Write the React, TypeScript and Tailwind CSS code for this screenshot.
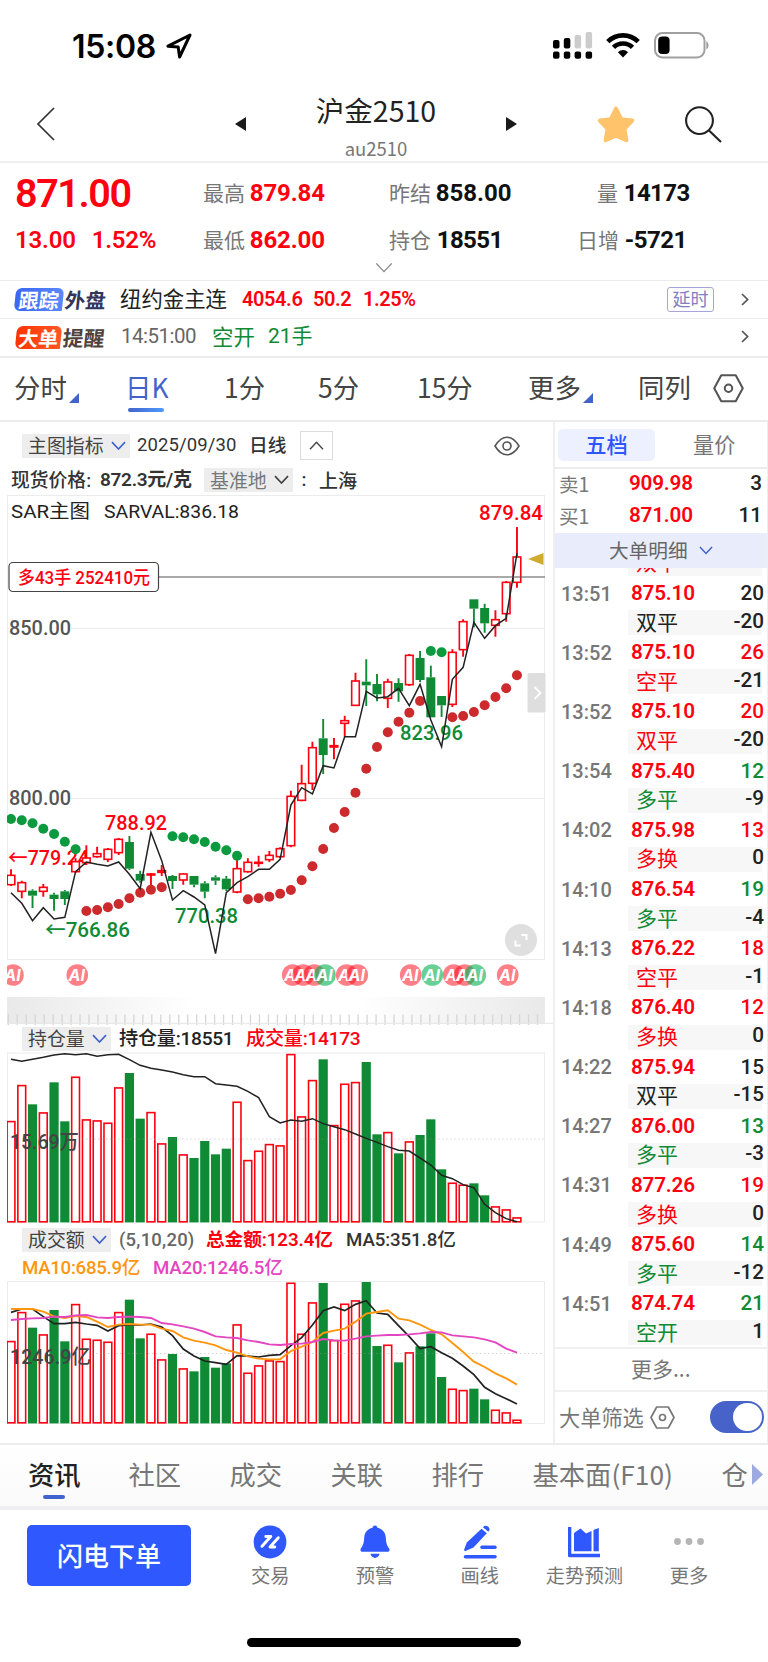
import React from "react";

type Tone = "r" | "g";

type Candle = [Tone, number, number, number, number];

type Deal = {
  time: string;
  price: string;
  vol: string;
  volColor: string;
  kind: string;
  kindColor: string;
  diff: string;
};

const RED = "#ff0010";
const GREEN = "#0f8a35";
const PITCH = 10.765;
const NUM = "font-['Roboto','Noto_Sans_CJK_SC',sans-serif]";

const cx = (i: number) => 11 + i * PITCH;

// series values are 3x pixels counted from the top of their own chart area
const mainY = (v: number) => 480 + v / 3;
const volY = (v: number) => 950 + v / 3;
const amtY = (v: number) => 1220 + v / 3;

// tone, high, body top, body bottom, low
const candles: Candle[] = [
  ["r", 1168, 1186, 1214, 1218],
  ["r", 1202, 1208, 1234, 1255],
  ["g", 1228, 1232, 1247, 1284],
  ["r", 1212, 1222, 1234, 1250],
  ["g", 1238, 1244, 1257, 1292],
  ["g", 1230, 1234, 1257, 1275],
  ["r", 1135, 1145, 1175, 1178],
  ["r", 1096, 1134, 1148, 1155],
  ["r", 1100, 1121, 1130, 1133],
  ["r", 1104, 1108, 1138, 1146],
  ["r", 1074, 1078, 1118, 1125],
  ["g", 1068, 1086, 1166, 1170],
  ["g", 1172, 1182, 1202, 1208],
  ["r", 1179, 1182, 1185, 1220],
  ["r", 1155, 1172, 1177, 1188],
  ["g", 1185, 1188, 1203, 1227],
  ["r", 1180, 1182, 1200, 1214],
  ["g", 1188, 1188, 1214, 1222],
  ["g", 1204, 1210, 1235, 1255],
  ["g", 1186, 1192, 1202, 1215],
  ["g", 1188, 1196, 1228, 1233],
  ["r", 1135, 1166, 1236, 1240],
  ["r", 1135, 1147, 1175, 1178],
  ["r", 1127, 1147, 1150, 1160],
  ["r", 1113, 1126, 1139, 1146],
  ["r", 1102, 1106, 1130, 1135],
  ["r", 932, 949, 1097, 1102],
  ["r", 854, 911, 961, 964],
  ["r", 785, 803, 910, 930],
  ["g", 717, 775, 825, 882],
  ["r", 774, 797, 801, 838],
  ["r", 707, 722, 730, 770],
  ["r", 578, 603, 676, 678],
  ["g", 538, 605, 616, 678],
  ["g", 582, 612, 643, 664],
  ["r", 596, 606, 655, 684],
  ["g", 595, 609, 634, 665],
  ["r", 522, 526, 614, 618],
  ["g", 513, 534, 600, 606],
  ["g", 557, 592, 712, 712],
  ["g", 648, 648, 676, 711],
  ["r", 508, 517, 673, 681],
  ["r", 418, 425, 509, 530],
  ["g", 358, 358, 386, 442],
  ["g", 371, 384, 430, 458],
  ["r", 391, 419, 436, 470],
  ["r", 303, 307, 401, 425],
  ["r", 141, 231, 307, 323],
];

const spot = [
  1238, 1270, 1322, 1283, 1317, 1312, 1175, 1146, 1153, 1158, 1146, 1183, 1226, 1057, 1142, 1260,
  1232, 1251, 1275, 1421, 1238, 1208, 1190, 1168, 1168, 1138, 975, 923, 942, 857, 864, 770, 770,
  634, 654, 650, 625, 677, 613, 720, 800, 598, 562, 427, 475, 437, 415, 220,
];

const sar = [
  1017, 1021, 1030, 1046, 1062, 1085, 1108, 1293, 1290, 1282, 1272, 1255, 1238, 1229, 1222, 1069,
  1072, 1078, 1086, 1100, 1111, 1127, 1258, 1255, 1250, 1241, 1230, 1201, 1159, 1107, 1044, 996,
  938, 866, 801, 757, 725, 698, 663, 513, 517, 712, 708, 696, 676, 651, 625, 586,
];

const sarIsGreen = (i: number) => i < 7 || (i > 14 && i < 22) || i === 39 || i === 40;

const volume = [
  513, 405, 463, 487, 397, 514, 380, 508, 511, 518, 412, 369, 506, 486, 580, 561, 613, 624, 573,
  613, 596, 455, 630, 602, 582, 586, 312, 499, 390, 328, 525, 401, 396, 336, 553, 546, 610, 574,
  555, 508, 658, 698, 704, 700, 736, 769, 778, 802,
];

const position = [
  328, 334, 328, 322, 315, 311, 314, 311, 319, 314, 313, 329, 346, 355, 360, 366, 374, 380, 380,
  401, 405, 409, 424, 443, 500, 519, 510, 514, 506, 521, 530, 539, 552, 565, 577, 590, 601, 603,
  624, 645, 676, 686, 704, 713, 763, 788, 806, 815,
];

const amount = [
  363, 276, 323, 343, 270, 364, 252, 356, 359, 365, 276, 239, 355, 341, 418, 402, 445, 454, 411,
  443, 430, 313, 458, 436, 421, 423, 188, 341, 247, 189, 360, 251, 241, 186, 378, 374, 427, 397,
  379, 340, 471, 506, 510, 506, 538, 569, 577, 599,
];

const ma5 = [
  277, 267, 267, 290, 311, 311, 307, 312, 316, 333, 317, 315, 315, 312, 321, 347, 387, 408, 423,
  428, 433, 407, 408, 411, 406, 404, 377, 353, 315, 272, 261, 272, 253, 242, 279, 283, 317, 350,
  386, 380, 398, 415, 438, 464, 502, 521, 536, 552,
];

const ma10 = [
  267, 267, 267, 275, 289, 294, 288, 291, 305, 321, 314, 312, 314, 314, 326, 333, 352, 362, 368,
  376, 390, 398, 409, 416, 418, 418, 393, 380, 366, 339, 332, 326, 305, 281, 276, 271, 296, 301,
  314, 330, 343, 369, 396, 425, 441, 460, 475, 494,
];

const ma20 = [
  300, 297, 295, 294, 290, 291, 286, 285, 292, 294, 291, 290, 291, 294, 309, 313, 319, 326, 336,
  349, 352, 354, 361, 366, 373, 375, 372, 371, 366, 357, 361, 362, 356, 349, 347, 345, 345, 343,
  340, 336, 337, 346, 349, 352, 358, 367, 386, 398,
];

const badges: [number, Tone][] = [
  [13, "r"],
  [77.3, "r"],
  [292.7, "r"],
  [303.3, "r"],
  [314.3, "r"],
  [325, "g"],
  [346.7, "r"],
  [357.3, "r"],
  [410.7, "r"],
  [432.3, "g"],
  [453.7, "r"],
  [464.7, "r"],
  [475.3, "g"],
  [507.7, "r"],
];

const R = "text-[#ff0010]";
const G = "text-[#0f8a35]";
const K = "text-[#222]";

const deals: Deal[] = [
  { time: "13:51", price: "875.10", vol: "20", volColor: K, kind: "双平", kindColor: K, diff: "-20" },
  { time: "13:52", price: "875.10", vol: "26", volColor: R, kind: "空平", kindColor: R, diff: "-21" },
  { time: "13:52", price: "875.10", vol: "20", volColor: R, kind: "双平", kindColor: R, diff: "-20" },
  { time: "13:54", price: "875.40", vol: "12", volColor: G, kind: "多平", kindColor: G, diff: "-9" },
  { time: "14:02", price: "875.98", vol: "13", volColor: R, kind: "多换", kindColor: R, diff: "0" },
  { time: "14:10", price: "876.54", vol: "19", volColor: G, kind: "多平", kindColor: G, diff: "-4" },
  { time: "14:13", price: "876.22", vol: "18", volColor: R, kind: "空平", kindColor: R, diff: "-1" },
  { time: "14:18", price: "876.40", vol: "12", volColor: R, kind: "多换", kindColor: R, diff: "0" },
  { time: "14:22", price: "875.94", vol: "15", volColor: K, kind: "双平", kindColor: K, diff: "-15" },
  { time: "14:27", price: "876.00", vol: "13", volColor: G, kind: "多平", kindColor: G, diff: "-3" },
  { time: "14:31", price: "877.26", vol: "19", volColor: R, kind: "多换", kindColor: R, diff: "0" },
  { time: "14:49", price: "875.60", vol: "14", volColor: G, kind: "多平", kindColor: G, diff: "-12" },
  { time: "14:51", price: "874.74", vol: "21", volColor: G, kind: "空开", kindColor: G, diff: "1" },
];

const points = (values: number[], y: (v: number) => number) =>
  values.map((v, i) => `${cx(i)},${y(v)}`).join(" ");

const Label = ({
  x,
  y,
  w,
  size = 20,
  fill,
  weight = 500,
  children,
}: {
  x: number;
  y: number;
  w: number;
  size?: number;
  fill: string;
  weight?: number;
  children: string;
}) => (
  <text
    x={x}
    y={y}
    textLength={w}
    lengthAdjust="spacingAndGlyphs"
    fontSize={size}
    fontWeight={weight}
    fill={fill}
    className={NUM}
  >
    {children}
  </text>
);

const Chevron = ({ className, w = 15, color = "#4263cc", sw = 1.8 }: { className?: string; w?: number; color?: string; sw?: number }) => (
  <svg width={w} height={w * 0.62} viewBox="0 0 16 10" className={`shrink-0 ${className ?? ""}`} fill="none" stroke={color} strokeWidth={sw}>
    <path d="M1 1.2 L8 8.6 L15 1.2" />
  </svg>
);

const Right = () => (
  <svg width="8" height="13" viewBox="0 0 8 13" className="shrink-0" fill="none" stroke="#555" strokeWidth="1.7">
    <path d="M1 1 L6.6 6.5 L1 12" />
  </svg>
);

const Hexagon = ({ size, color = "#555", className }: { size: number; color?: string; className?: string }) => (
  <svg width={size} height={size * 0.92} viewBox="0 0 30 27.6" fill="none" stroke={color} strokeWidth="2" strokeLinejoin="round" className={`shrink-0 ${className ?? ""}`}>
    <path d="M8 1.2 H22 L28.8 13.8 L22 26.4 H8 L1.2 13.8 Z" />
    <circle cx="15" cy="13.8" r="3.6" />
  </svg>
);

const StatusBar = () => (
  <div className="flex h-[80px] items-start pt-[32px] pl-[72px]">
    <div className="-mt-[5px] w-[85px] font-['Inter',sans-serif] text-[32px] leading-[40px] font-semibold tracking-[-0.3px] text-black">15:08</div>
    <svg width="26" height="26" viewBox="0 0 26 26" className="mt-[1px] ml-[9px]" fill="none" stroke="#000" strokeWidth="3" strokeLinejoin="round">
      <path d="M24 2 L2 13.2 L12.2 14 L13.6 24 Z" />
    </svg>
    <svg width="40" height="28" viewBox="0 0 40 28" className="ml-[361px]">
      <rect x="0" y="8" width="6.5" height="8.4" rx="2" />
      <rect x="10.8" y="6" width="6.5" height="10.4" rx="2" />
      <rect x="21.6" y="3" width="6.5" height="13.4" rx="2" fill="#ccc" />
      <rect x="32.6" y="0" width="6.5" height="16.4" rx="2" fill="#ccc" />
      {[0, 10.8, 21.6, 32.6].map((x) => (
        <rect key={x} x={x} y="19.4" width="6.5" height="7.4" rx="2" />
      ))}
    </svg>
    <svg width="34" height="25" viewBox="0 0 34 25" className="mt-[1px] ml-[13px]" fill="none" stroke="#000" strokeWidth="4.6">
      <path d="M1.8 8.6 A21.6 21.6 0 0 1 32.2 8.6" />
      <path d="M7.5 14.4 A13.4 13.4 0 0 1 26.5 14.4" />
      <path d="M17 24.4 L11.9 19.2 A7.2 7.2 0 0 1 22.1 19.2 Z" fill="#000" stroke="none" />
    </svg>
    <svg width="56" height="27" viewBox="0 0 56 27" className="ml-[14px]">
      <rect x="1" y="1" width="49.5" height="24.4" rx="7.5" fill="none" stroke="#a0a0a0" strokeWidth="2" />
      <rect x="4.2" y="4.4" width="11.4" height="17.6" rx="4" />
      <path d="M52.3 9 A5 5 0 0 1 52.3 17.4 Z" fill="#a0a0a0" />
    </svg>
  </div>
);

const Header = () => (
  <div className="grid h-[83px] grid-cols-[235px_298px_235px] border-b-2 border-[#efefef]">
    <svg width="20" height="34" viewBox="0 0 20 34" className="mt-[27px] ml-[36px]" fill="none" stroke="#333" strokeWidth="1.7">
      <path d="M18 1 L2 17 L18 33" />
    </svg>
    <div className="flex">
      <svg width="11" height="14" viewBox="0 0 11 14" className="mt-[37px]" fill="#1a1a1a">
        <path d="M11 0 V14 L0 7 Z" />
      </svg>
      <div className="w-[260px] text-center">
        <div className="mt-[12px] text-[28.5px] leading-[36px] text-[#222]">沪金2510</div>
        <div className="mt-[10px] text-[18.5px] leading-[20px] text-[#777]">au2510</div>
      </div>
      <svg width="11" height="14" viewBox="0 0 11 14" className="mt-[37px]" fill="#1a1a1a">
        <path d="M0 0 V14 L11 7 Z" />
      </svg>
    </div>
    <div className="flex pt-[26px] pl-[64px]">
      <svg width="38" height="38" viewBox="0 0 38 38" fill="#ffc36b" stroke="#ffc36b" strokeWidth="4" strokeLinejoin="round">
        <path d="M19 2.5 L24.2 13.2 L35.2 14.6 L27.4 22.8 L29.4 34.3 L19 29.6 L8.6 34.3 L10.6 22.8 L2.8 14.6 L13.8 13.2 Z" />
      </svg>
      <svg width="38" height="38" viewBox="0 0 38 38" className="ml-[49px]" fill="none" stroke="#222" strokeWidth="2.1">
        <circle cx="15.500" cy="14.6" r="13.4" />
        <path d="M25 24.5 L37 36" />
      </svg>
    </div>
  </div>
);

const Quote = () => (
  <div className="h-[117px] pt-[7px] pl-[15px]">
    <div className="grid h-[46px] grid-cols-[188px_186px_188px_1fr] items-center whitespace-nowrap text-[21px] text-[#777]">
      <span className={`${NUM} mt-[2px] text-[39.5px] leading-none font-semibold tracking-[-1.4px] text-[#ff0010]`}>871.00</span>
      <span>最高 <b className={`${NUM} text-[24px] tracking-[-0.1px] text-[#ff0010]`}>879.84</b></span>
      <span>昨结 <b className={`${NUM} text-[24px] text-[#111]`}>858.00</b></span>
      <span className="pl-[20px]">量 <b className={`${NUM} ml-[1px] text-[24px] tracking-[-0.6px] text-[#111]`}>14173</b></span>
    </div>
    <div className="mt-[1px] grid h-[46px] grid-cols-[188px_186px_188px_1fr] items-center whitespace-nowrap text-[21px] text-[#777]">
      <span className={`${NUM} flex gap-[16px] text-[24px] font-semibold tracking-[-0.2px] text-[#ff0010]`}>
        <span>13.00</span>
        <span>1.52%</span>
      </span>
      <span>最低 <b className={`${NUM} text-[24px] tracking-[-0.1px] text-[#ff0010]`}>862.00</b></span>
      <span>持仓 <b className={`${NUM} ml-[1px] text-[24px] tracking-[-0.6px] text-[#111]`}>18551</b></span>
      <span>日增 <b className={`${NUM} ml-[1px] text-[24px] tracking-[-0.5px] text-[#111]`}>-5721</b></span>
    </div>
    <Chevron w={18} color="#888" sw={1.2} className="mt-[-1px] ml-[360px]" />
  </div>
);

const Notices = () => (
  <div className="text-[21.4px] whitespace-nowrap">
    <div className="flex h-[38px] items-center border-t border-[#ebebeb] pb-[2px] pl-[15px]">
      <span className="mt-[2px] flex h-[23px] w-[48px] -skew-x-6 items-center justify-center rounded-[6px] rounded-br-none bg-gradient-to-r from-[#3c66f5] to-[#5b88ff] text-[20px] leading-none font-bold text-white">跟踪</span>
      <span className="mt-[1px] ml-[2px] w-[41px] -skew-x-6 text-[20.5px] leading-none font-bold text-[#33365a]">外盘</span>
      <span className="ml-[14px] w-[122px] text-[#222]">纽约金主连</span>
      <span className={`${NUM} w-[71px] text-[20px] font-semibold tracking-[-0.4px] text-[#ff0010]`}>4054.6</span>
      <span className={`${NUM} w-[50px] text-[20px] font-semibold tracking-[-0.4px] text-[#ff0010]`}>50.2</span>
      <span className={`${NUM} w-[304px] text-[20px] font-semibold tracking-[-0.4px] text-[#ff0010]`}>1.25%</span>
      <span className="mt-[1px] flex h-[25px] w-[47px] items-center justify-center rounded-[3px] border-[1.5px] border-[#a5a5dc] pb-[1px] text-[18px] text-[#8080c0]">延时</span>
      <span className="mt-[1px] ml-[27px]"><Right /></span>
    </div>
    <div className="flex h-[38px] items-center border-t border-[#ebebeb] pb-[2px] pl-[16px]">
      <span className="mt-[2px] flex h-[23px] w-[45px] -skew-x-6 items-center justify-center rounded-[6px] rounded-br-none bg-gradient-to-r from-[#ff3300] to-[#ff5722] text-[20px] leading-none font-bold text-white">大单</span>
      <span className="mt-[1px] ml-[2px] w-[43px] -skew-x-6 text-[20.8px] leading-none font-bold text-[#4f413b]">提醒</span>
      <span className={`${NUM} ml-[15px] w-[91px] text-[20.5px] tracking-[-0.5px] text-[#666]`}>14:51:00</span>
      <span className={`${G} w-[56px]`}>空开</span>
      <span className={`${G} ${NUM} w-[473px] text-[21px]`}>21手</span>
      <Right />
    </div>
  </div>
);

const Corner = ({ className }: { className: string }) => (
  <svg width="10" height="10" viewBox="0 0 10 10" className={className} fill="#4263cc">
    <path d="M10 0 V10 H0 Z" />
  </svg>
);

const PeriodTabs = () => (
  <div className="flex h-[66px] items-center border-y-2 border-[#ececec] pb-[4px] pl-[14px] text-[26.4px] whitespace-nowrap text-[#444]">
    <span className="w-[54px]">分时</span>
    <Corner className="mt-[22px] ml-[1px]" />
    <span className="relative ml-[46px] w-[99px] text-[#4263cc]">
      日K
      <i className="absolute top-[41px] left-[3px] h-[4px] w-[36px] rounded-full bg-gradient-to-r from-[#4263cc] to-[#4f9bff]" />
    </span>
    <span className="w-[94px]">1分</span>
    <span className="w-[99px]">5分</span>
    <span className="w-[111px]">15分</span>
    <span className="w-[54px]">更多</span>
    <Corner className="mt-[22px] ml-[1px]" />
    <span className="ml-[45px] w-[75px]">同列</span>
    <Hexagon size={31} className="mt-[3px]" />
  </div>
);

const Bars = ({ values, y, bottom }: { values: number[]; y: (v: number) => number; bottom: number }) => (
  <>
    {values.map((v, i) =>
      candles[i][0] === "g" ? (
        <rect key={i} x={cx(i) - 4.6} y={y(v)} width={9.2} height={bottom - y(v)} fill={GREEN} />
      ) : (
        <rect key={i} x={cx(i) - 3.9} y={y(v) + 0.6} width={7.8} height={bottom - y(v) - 1.2} fill="#fff" stroke={RED} strokeWidth={1.6} />
      )
    )}
  </>
);

const MainChart = () => (
  <svg width="553" height="531" viewBox="0 494 553 531" className="block">
    <defs>
      <clipPath id="plot">
        <rect x="7" y="494" width="538" height="531" />
      </clipPath>
      <linearGradient id="ruler">
        <stop offset="0" stopColor="#e9e9e9" />
        <stop offset="0.35" stopColor="#fff" />
        <stop offset="0.65" stopColor="#fff" />
        <stop offset="1" stopColor="#e9e9e9" />
      </linearGradient>
    </defs>
    <rect x="7.5" y="495.5" width="537" height="464" fill="none" stroke="#ececec" />
    <path d="M8 628.5 H544 M8 798.5 H544" stroke="#ececec" />
    <Label x={11} y={518} w={79} size={19} fill="#222" weight={400}>SAR主图</Label>
    <Label x={104} y={518} w={135} size={19} fill="#222" weight={400}>SARVAL:836.18</Label>
    <rect x="9" y="619" width="62" height="18" fill="#fff" />
    <rect x="9" y="789" width="62" height="18" fill="#fff" />
    <Label x={9} y={634.5} w={62} fill="#555" size={20.5} weight={500}>850.00</Label>
    <Label x={9} y={804.5} w={62} fill="#555" size={20.5} weight={500}>800.00</Label>
    <Label x={8} y={864.5} w={81} fill={RED} size={20.5}>←779.24</Label>
    <Label x={105} y={829.5} w={62} fill={RED} size={20.5}>788.92</Label>
    <Label x={479} y={519.5} w={64} fill={RED} size={20.5}>879.84</Label>
    <Label x={45} y={937} w={85} fill={GREEN} size={20.5}>←766.86</Label>
    <Label x={175} y={923} w={63} fill={GREEN} size={20.5}>770.38</Label>
    <Label x={400} y={740} w={63} fill={GREEN} size={20.5}>823.96</Label>
    <g clipPath="url(#plot)">
      {candles.map(([tone, hi, top, bottom, lo], i) => {
        const color = tone === "r" ? RED : GREEN;
        return (
          <g key={i} stroke={color} strokeWidth={1.9}>
            <path d={`M${cx(i)} ${mainY(hi)} V${mainY(top)} M${cx(i)} ${mainY(bottom)} V${mainY(lo)}`} />
            {tone === "r" ? (
              <rect x={cx(i) - 3.8} y={mainY(top)} width={7.6} height={mainY(bottom) - mainY(top)} fill="#fff" strokeWidth={1.6} />
            ) : (
              <rect x={cx(i) - 4.5} y={mainY(top)} width={9} height={mainY(bottom) - mainY(top)} fill={color} stroke="none" />
            )}
          </g>
        );
      })}
      {sar.map((v, i) => (
        <circle key={i} cx={cx(i)} cy={mainY(v)} r={5} fill={sarIsGreen(i) ? "#0c9a3f" : "#cc2a2c"} />
      ))}
      <polyline points={points(spot, mainY)} fill="none" stroke="#222" strokeWidth={1.5} />
      <path d="M158 577 H545" stroke="#555" strokeWidth="1.2" />
      {badges.map(([x, tone]) => (
        <g key={x}>
          <circle cx={x} cy={975} r={10.8} fill={tone === "r" ? RED : "#00b050"} fillOpacity={tone === "r" ? 0.5 : 0.6} />
          <text x={x - 0.5} y={981} textAnchor="middle" fontSize="16" fontWeight="700" fontStyle="italic" fill="#fff" className="font-['Inter',sans-serif]">
            AI
          </text>
        </g>
      ))}
      <rect x="7" y="997" width="538" height="27" fill="url(#ruler)" />
      {Array.from({ length: 60 }, (_, i) => (
        <path key={i} d={`M${8.3 + i * 8.97} 1014.5 V1025`} stroke="#d6d6d6" strokeWidth="1.3" />
      ))}
    </g>
    <path d="M7 1023.3 H553" stroke="#e6e6e6" strokeWidth="1" />
    <rect x="9" y="562.5" width="149.5" height="29" rx="4" fill="#fff" stroke="#444" strokeWidth="1.2" />
    <Label x={18} y={584} w={132} size={18} fill={RED}>多43手 252410元</Label>
    <path d="M528 559 L543.5 553 V565 Z" fill="#d1ac2c" />
    <rect x="527.5" y="673" width="18" height="39.5" rx="1.5" fill="#dedede" />
    <path d="M534.5 687 L540.5 693 L534.5 699" fill="none" stroke="#fff" strokeWidth="1.8" />
    <circle cx="521" cy="940" r="16" fill="#dfdfdf" />
    <path d="M521.5 935 H526.5 V940 M520.5 945.5 H515.5 V940.5" fill="none" stroke="#fff" strokeWidth="2" />
  </svg>
);

const VolumeChart = () => (
  <svg width="553" height="172" viewBox="0 1052 553 172" className="block">
    <clipPath id="vol">
      <rect x="7" y="1052" width="538" height="171" />
    </clipPath>
    <rect x="7.5" y="1053" width="537" height="169" fill="none" stroke="#ececec" />
    <g clipPath="url(#vol)">
      <Bars values={volume} y={volY} bottom={1222.4} />
      <path d="M82 1139 H544" stroke="#999" strokeOpacity="0.4" strokeDasharray="1.5 2.5" />
      <polyline points={points(position, volY)} fill="none" stroke="#222" strokeWidth={1.5} />
    </g>
    <Label x={10} y={1149} w={69} size={20} fill="#444">15.69万</Label>
  </svg>
);

const AmountChart = () => (
  <svg width="553" height="145" viewBox="0 1280 553 145" className="block">
    <clipPath id="amt">
      <rect x="7" y="1280" width="538" height="145" />
    </clipPath>
    <rect x="7.5" y="1281.5" width="537" height="142" fill="none" stroke="#ececec" />
    <g clipPath="url(#amt)">
      <Bars values={amount} y={amtY} bottom={1423.4} />
      <path d="M92 1353.5 H544" stroke="#999" strokeOpacity="0.4" strokeDasharray="1.5 2.5" />
      <polyline points={points(ma5, amtY)} fill="none" stroke="#222" strokeWidth={1.7} />
      <polyline points={points(ma10, amtY)} fill="none" stroke="#ff960f" strokeWidth={1.9} />
      <polyline points={points(ma20, amtY)} fill="none" stroke="#e445c0" strokeWidth={1.9} />
    </g>
    <Label x={10} y={1364} w={81} size={20} fill="#444">1246.9亿</Label>
  </svg>
);

const Picker = ({ text, className }: { text: string; className: string }) => (
  <span className={`flex h-[24px] shrink-0 items-center justify-between rounded-[1px] bg-[#ededed] px-[4px] text-[18.9px] leading-none text-[#444] ${className}`}>
    <span className="-mt-[1px]">{text}</span>
    <Chevron />
  </span>
);

const ChartColumn = () => (
  <div className="w-[553px] shrink-0 whitespace-nowrap">
    <div className="flex h-[45px] items-center pt-[2px] pl-[22px]">
      <Picker text="主图指标" className="w-[108px] pl-[6px]" />
      <span className={`${NUM} ml-[7px] w-[112px] text-[18.5px] tracking-[0.1px] text-[#333]`}>2025/09/30</span>
      <span className="-mt-[2px] w-[51px] text-[18.7px] font-medium text-[#333]">日线</span>
      <span className="flex h-[29px] w-[33px] items-center justify-center border border-[#dcdcdc]">
        <Chevron color="#444" sw={1.5} className="rotate-180" />
      </span>
      <svg width="26" height="20" viewBox="0 0 26 20" className="ml-[161px]" fill="none" stroke="#555" strokeWidth="1.6">
        <path d="M1 10 C5 3.5 9 1.2 13 1.2 S21 3.5 25 10 C21 16.500 17 18.800 13 18.800 S5 16.500 1 10 Z" />
        <circle cx="13" cy="10" r="4" />
      </svg>
    </div>
    <div className="flex h-[27px] items-center pb-[1px] pl-[11px] text-[18.8px] font-medium text-[#333]">
      <span className="w-[89px]">现货价格<span className={NUM}>:</span></span>
      <span className={`${NUM} w-[104px] text-[19px] font-semibold tracking-[-0.3px]`}>872.3元/克</span>
      <span className="flex h-[24px] w-[89px] items-center justify-between bg-[#ededed] px-[4px] pl-[6px] text-[18.9px] leading-none font-normal text-[#777]">
        <span>基准地</span>
        <Chevron color="#444" />
      </span>
      <span className={`${NUM} ml-[2px] w-[18px] text-center`}>:</span>
      <span className="ml-[6px] text-[19px]">上海</span>
    </div>
    <MainChart />
    <div className="flex h-[27px] items-center pl-[22px] text-[18.7px] font-medium">
      <Picker text="持仓量" className="w-[89px] pl-[6px] font-normal" />
      <span className={`${NUM} ml-[8px] w-[127px] pt-[2px] text-[19.2px] tracking-[-0.3px] text-[#222]`}>持仓量:18551</span>
      <span className={`${NUM} pt-[2px] text-[19.2px] tracking-[-0.3px] text-[#ff0010]`}>成交量:14173</span>
    </div>
    <VolumeChart />
    <div className="flex h-[32px] items-center pl-[22px] text-[18.7px] font-medium">
      <Picker text="成交额" className="w-[89px] pl-[6px] font-normal" />
      <span className={`${NUM} ml-[8px] w-[87px] pt-[1px] text-[18.5px] tracking-[0.2px] text-[#666]`}>(5,10,20)</span>
      <span className={`${NUM} w-[140px] pt-[1px] font-semibold tracking-[-0.1px] text-[#ff0010]`}>总金额:123.4亿</span>
      <span className={`${NUM} pt-[1px] tracking-[-0.1px] text-[#333]`}>MA5:351.8亿</span>
    </div>
    <div className="flex h-[24px] items-center pl-[22px] text-[18.7px] font-medium">
      <span className={`${NUM} w-[131px] tracking-[-0.3px] text-[#ff960f]`}>MA10:685.9亿</span>
      <span className={`${NUM} tracking-[-0.2px] text-[#e445c0]`}>MA20:1246.5亿</span>
    </div>
    <AmountChart />
  </div>
);

const OrderBook = () => (
  <div className="flex-1 overflow-hidden border-r border-l-2 border-[#efefef] whitespace-nowrap">
    <div className="flex h-[47px] items-center border-b-2 border-[#ececec] pt-[1px] pl-[3px] text-[21.2px]">
      <span className="flex h-[32px] w-[97px] items-center justify-center rounded-[5px] bg-[#edf1ff] pb-[3px] font-medium text-[#2f55ff]">五档</span>
      <span className="-mt-[2px] ml-[38px] text-[#777]">量价</span>
    </div>
    {[
      ["卖1", "909.98", "3"],
      ["买1", "871.00", "11"],
    ].map(([side, price, n]) => (
      <div key={side} className="flex h-[32px] items-center pr-[5px] pb-[3px] pl-[4px]">
        <span className="mt-[1px] w-[70px] text-[19.5px] text-[#777]">{side}</span>
        <span className={`${NUM} text-[20.7px] font-semibold tracking-[-0.2px] text-[#ff0010]`}>{price}</span>
        <span className={`${NUM} ml-auto text-[20.7px] font-medium text-[#222]`}>{n}</span>
      </div>
    ))}
    <div className="flex h-[35px] items-center bg-[#e9ecfa] pl-[54px] text-[19.7px] text-[#666]">
      <span className="-mt-[2px]">大单明细</span>
      <Chevron w={14} className="ml-[11px]" />
    </div>
    {/* tail of the row scrolled under the header */}
    <div className="flex h-[8px] flex-col justify-end overflow-hidden pr-[5px]">
      <div className="ml-[73px] flex h-[25px] shrink-0 items-center justify-between bg-[#f7f7f7] pl-[8px]">
        <span className="-mt-[3px] text-[21px] text-[#ff0010]">双平</span>
        <span className={`${NUM} -mr-[2px] pb-[3px] text-[20.7px] text-[#222]`}>-12</span>
      </div>
    </div>
    {deals.map((d, i) => (
      <div key={i} className="h-[59.2px]">
        <div className={`${NUM} flex h-[34.2px] items-center pt-[1px] pr-[3px] pl-[6px] text-[20.7px]`}>
          <span className="w-[70px] text-[20px] font-medium text-[#777]">{d.time}</span>
          <span className="font-semibold tracking-[-0.2px] text-[#ff0010]">{d.price}</span>
          <span className={`ml-auto font-medium ${d.volColor}`}>{d.vol}</span>
        </div>
        <div className="mr-[5px] ml-[73px] flex h-[25px] items-center justify-between bg-[#f7f7f7] pl-[8px]">
          <span className={`-mt-[3px] text-[21px] leading-[25px] ${d.kindColor}`}>{d.kind}</span>
          <span className={`${NUM} -mr-[2px] pb-[4px] text-[20.7px] leading-[22px] font-medium text-[#222]`}>{d.diff}</span>
        </div>
      </div>
    ))}
    <div className="mt-[2px] h-[45px] border-y-2 border-[#f0f0f0] pl-[76px] text-[21px] leading-[38px] text-[#777]">更多...</div>
    <div className="flex h-[50px] items-center pl-[4px] text-[21.2px] text-[#777]">
      <span className="-mt-[2px] w-[91px]">大单筛选</span>
      <Hexagon size={25} color="#777" />
      <span className="mr-[3px] ml-auto flex h-[32px] w-[54px] items-center justify-end rounded-full bg-[#4763c9] pr-[2px]">
        <i className="h-[28px] w-[29px] rounded-full bg-white" />
      </span>
    </div>
  </div>
);

const NewsTabs = () => (
  <div className="flex h-[67px] items-center border-t-2 border-b-4 border-t-[#ececec] border-b-[#efeff1] bg-gradient-to-b from-white to-[#fafafb] pb-[3px] pl-[28px] text-[26.3px] whitespace-nowrap text-[#777]">
    <span className="relative w-[100.5px] font-medium text-[#222]">
      资讯
      <i className="absolute top-[41px] left-[15px] h-[4px] w-[22px] rounded-full bg-[#4263cc]" />
    </span>
    <span className="w-[101px]">社区</span>
    <span className="w-[101px]">成交</span>
    <span className="w-[101px]">关联</span>
    <span className="w-[101px]">排行</span>
    <span className="w-[189px]">基本面(F10)</span>
    <span className="w-[30px]">仓</span>
    <svg width="11" height="21" viewBox="0 0 11 21" fill="#9daae0">
      <path d="M0 0 L11 10.5 L0 21 Z" />
    </svg>
  </div>
);

const toolIcons: Record<string, React.ReactNode> = {
  交易: (
    <>
      <circle cx="17" cy="17" r="16.4" />
      <path d="M12.800 11.500 H17.800 L9 21.300 M25.300 12.700 L17 22 H21.800" fill="none" stroke="#fff" strokeWidth="2.900" strokeLinecap="round" strokeLinejoin="round" />
    </>
  ),
  预警: (
    <>
      <path d="M17 0.500 C18.500 0.500 19.300 1.500 19.400 2.700 C25 4 27.500 8 27.800 12.500 C28 18 29 20.500 31.200 23.500 C32 25 31.500 26.700 29.800 26.700 H4.200 C2.500 26.700 2 25 2.800 23.500 C5 20.500 6 18 6.200 12.500 C6.500 8 9 4 14.600 2.700 C14.700 1.500 15.500 0.500 17 0.500 Z" />
      <path d="M12.500 28.800 H21.500 C20.500 34.300 13.500 34.300 12.500 28.800 Z" />
    </>
  ),
  画线: (
    <>
      <path d="M18.500 3.800 L23.800 8.200 L10.500 22.500 L2.500 26 Q0.900 26.200 1.200 24.500 L3.800 17.500 Z" />
      <path d="M20 2.200 Q22 -0.300 25 1.600 Q27.800 4 25.300 6.700 Z" />
      <path d="M19 22.300 H32 M2.500 31.800 H32" fill="none" stroke="#2f58ff" strokeWidth="3.600" strokeLinecap="round" />
    </>
  ),
  走势预测: (
    <>
      <path d="M1 2 H4.300 V28.700 H33 V32.200 H2.500 Q1 32.200 1 30.700 Z" />
      <path d="M7 8 L13.500 3.500 L19 8.500 L24.500 6 V26.200 H7 Z" />
      <path d="M26.500 5 L31.800 3 V26.200 H26.500 Z" />
    </>
  ),
  更多: (
    <g fill="#b5b5b5">
      <circle cx="5.500" cy="16.500" r="3.400" />
      <circle cx="17" cy="16.500" r="3.400" />
      <circle cx="28.500" cy="16.500" r="3.400" />
    </g>
  ),
};

const Toolbar = () => (
  <div className="flex h-[128px] pt-[15px] pl-[27px]">
    <button className="h-[61px] w-[164px] rounded-[5px] bg-[#2f58ff] pb-[2px] text-[26px] font-medium text-white">闪电下单</button>
    <div className="ml-[27px] flex">
      {Object.entries(toolIcons).map(([name, icon]) => (
        <div key={name} className="flex w-[104.7px] flex-col items-center text-[19.3px] leading-[26px] whitespace-nowrap text-[#777]">
          <svg width="34" height="34" viewBox="0 0 34 34" fill="#2f58ff" className="mb-[3px]">
            {icon}
          </svg>
          {name}
        </div>
      ))}
    </div>
  </div>
);

const App = () => (
  <div className="h-[1662px] w-[768px] overflow-hidden bg-white font-['Noto_Sans_CJK_SC',sans-serif]">
    <StatusBar />
    <Header />
    <Quote />
    <Notices />
    <PeriodTabs />
    <div className="flex h-[1021px]">
      <ChartColumn />
      <OrderBook />
    </div>
    <NewsTabs />
    <Toolbar />
    <div className="mx-auto h-[9px] w-[274px] rounded-full bg-black" />
  </div>
);

export default App;
